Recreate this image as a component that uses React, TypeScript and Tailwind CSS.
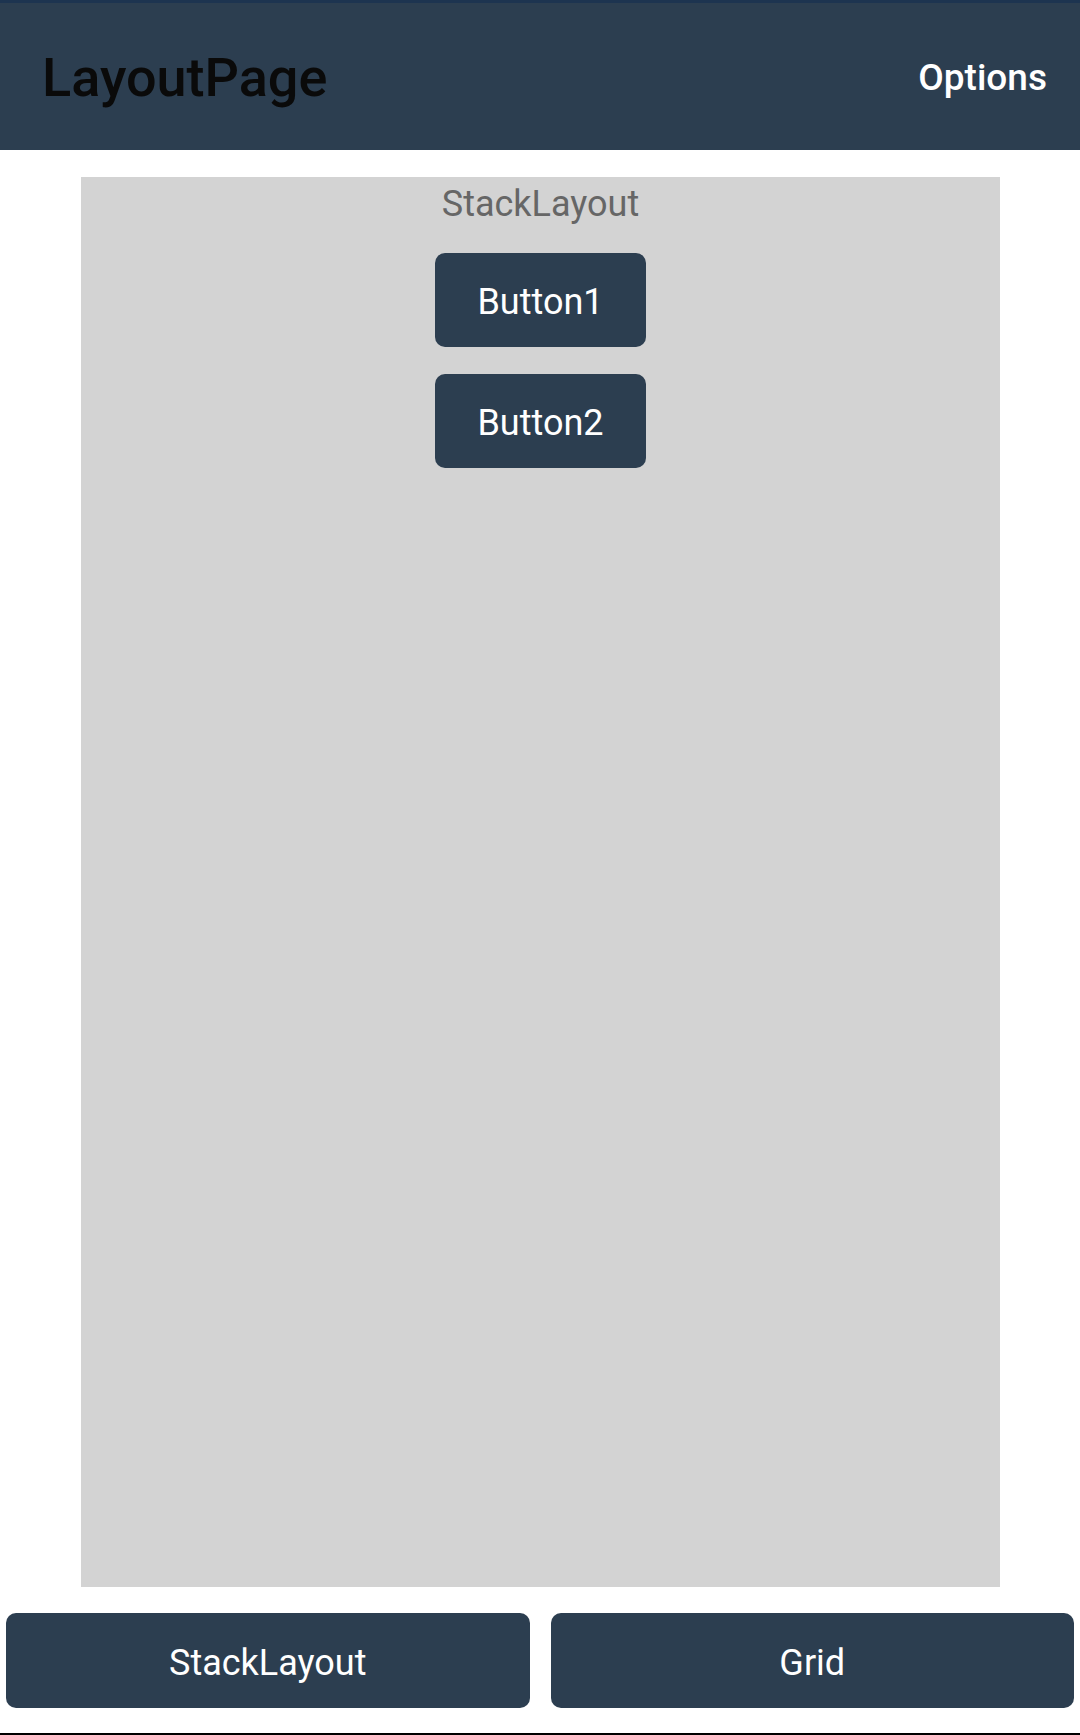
import React from "react";

export default function App() {
  const font = { fontFamily: "Roboto, 'Noto Sans', sans-serif" };
  return (
    <div className="w-[1080px] h-[1735px] bg-white flex flex-col" style={font}>
      <div className="h-[3px] bg-[#1d3450]" />
      <header className="h-[147px] bg-[#2c3e50] flex items-center justify-between pl-[42px] pr-[33px]">
        <span className="text-[54px] font-medium text-[#0a0a0a] leading-[64px] pt-[2px]">LayoutPage</span>
        <span className="text-[37px] font-medium text-white leading-[44px] pt-[2px]">Options</span>
      </header>
      <main className="mt-[27px] ml-[81px] w-[919px] h-[1410px] bg-[#d3d3d3] flex flex-col items-center pt-[6px]">
        <div className="text-[36px] leading-[42px] text-[#666666]">StackLayout</div>
        <button className="mt-[28px] w-[211px] h-[94px] rounded-[10px] bg-[#2c3e50] text-white text-[36px] flex items-center justify-center pt-[4px]">
          Button1
        </button>
        <button className="mt-[27px] w-[211px] h-[94px] rounded-[10px] bg-[#2c3e50] text-white text-[36px] flex items-center justify-center pt-[4px]">
          Button2
        </button>
      </main>
      <div className="mt-[26px] px-[6px] flex gap-[21px]">
        <button className="flex-1 h-[95px] rounded-[10px] bg-[#2c3e50] text-white text-[36px] flex items-center justify-center pt-[4px]">
          StackLayout
        </button>
        <button className="flex-1 h-[95px] rounded-[10px] bg-[#2c3e50] text-white text-[36px] flex items-center justify-center pt-[4px]">
          Grid
        </button>
      </div>
      <div className="mt-[25px] h-[2px] bg-black" />
    </div>
  );
}
